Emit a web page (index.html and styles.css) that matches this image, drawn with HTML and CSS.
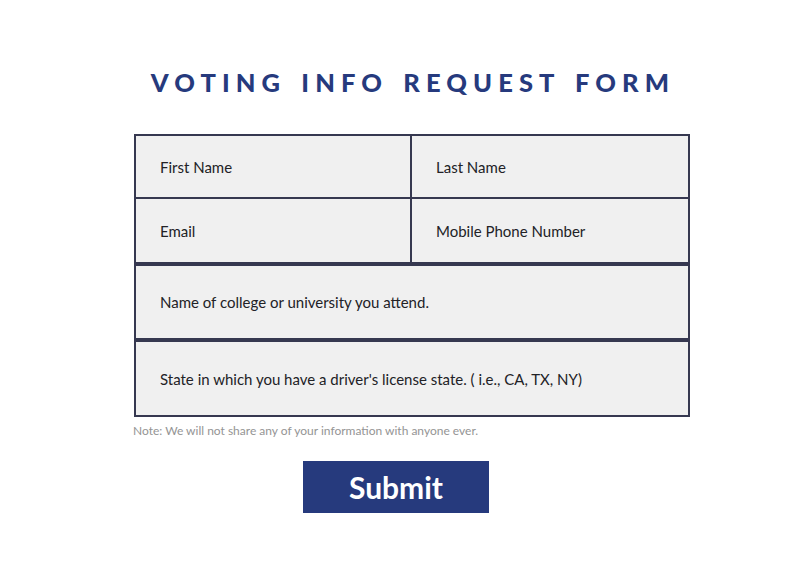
FILE: index.html
```html
<!DOCTYPE html>
<html>
<head>
<meta charset="utf-8">
<link rel="stylesheet" href="styles.css">
</head>
<body>
<div class="page">
  <div class="wrap">
    <h1 class="title">VOTING INFO REQUEST FORM</h1>
    <div class="form">
      <div class="pair">
        <div class="cell left">First Name</div>
        <div class="cell">Last Name</div>
      </div>
      <div class="pair second">
        <div class="cell left">Email</div>
        <div class="cell">Mobile Phone Number</div>
      </div>
      <div class="wide college">Name of college or university you attend.</div>
      <div class="wide state">State in which you have a driver's license state. ( i.e., CA, TX, NY)</div>
    </div>
    <p class="note">Note: We will not share any of your information with anyone ever.</p>
  </div>
  <div class="actions">
    <button class="submit">Submit</button>
  </div>
</div>
</body>
</html>
```
FILE: styles.css
```css
html, body {
  margin: 0;
  padding: 0;
  background: #ffffff;
}
.page {
  width: 795px;
  height: 569px;
  padding-top: 67px;
  box-sizing: border-box;
  font-family: Lato, "Liberation Sans", sans-serif;
}
.wrap {
  margin-left: 134px;
  width: 556px;
}
.title {
  margin: 0 0 37px 0;
  padding-left: 2px;
  font-family: Lato, sans-serif;
  font-weight: 900;
  font-size: 25.5px;
  line-height: 30px;
  letter-spacing: 6.1px;
  word-spacing: 3px;
  text-align: center;
  color: #263a7d;
}
.form {
  border: 2px solid #363850;
  background: #f0f0f0;
  box-sizing: border-box;
  width: 556px;
}
.pair {
  display: grid;
  grid-template-columns: 276px 1fr;
  height: 61px;
}
.pair.second {
  border-top: 2px solid #363850;
  height: 63px;
}
.cell {
  display: flex;
  align-items: center;
  padding-left: 24px;
  font-size: 15px;
  color: #222226;
}
.cell.left {
  border-right: 2px solid #363850;
}
.wide {
  display: flex;
  align-items: center;
  padding-left: 24px;
  border-top: 4px solid #363850;
  font-size: 15px;
  color: #222226;
}
.college { height: 72px; }
.state { height: 73px; }
.note {
  margin: 6px 0 0 -1px;
  font-size: 12px;
  font-weight: 400;
  color: #949494;
  line-height: 16px;
}
.actions {
  display: flex;
  justify-content: center;
  padding-top: 22px;
}
.submit {
  width: 186px;
  height: 52px;
  margin-left: -3px;
  border: none;
  background: #263a7d;
  color: #ffffff;
  font-family: Lato, sans-serif;
  font-weight: 700;
  font-size: 30px;
  padding: 0;
}
```
